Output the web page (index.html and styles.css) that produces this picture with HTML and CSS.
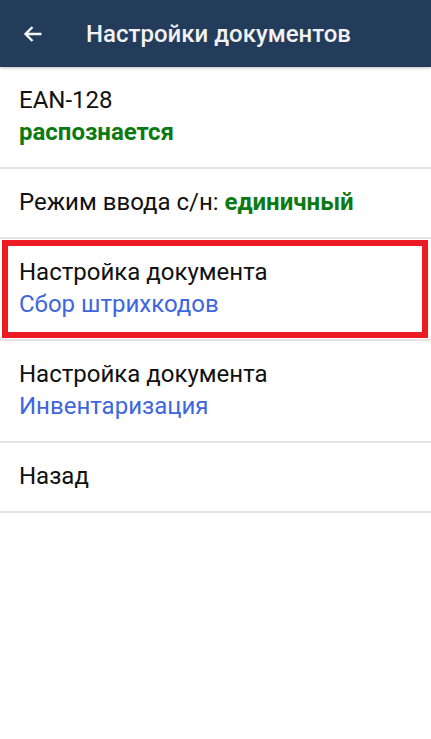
FILE: index.html
```html
<!DOCTYPE html>
<html lang="ru">
<head>
    <meta charset="UTF-8">
    <title>Настройки документов</title>
    <link rel="stylesheet" href="styles.css">
</head>
<body>
    <header class="app_bar">
        <a class="back" href="#">
            <svg width="24" height="24" viewBox="0 0 24 24">
                <path d="M20.5 12H4.5M11.5 5L4.5 12L11.5 19" fill="none" stroke="#f4f4f4" stroke-width="2.4"/>
            </svg>
        </a>
        <h1>Настройки документов</h1>
    </header>
    <ul class="menu">
        <li class="item">
            <span class="title">EAN-128</span>
            <span class="value ok">распознается</span>
        </li>
        <li class="item">
            <span class="title">Режим ввода с/н: <b class="ok">единичный</b></span>
        </li>
        <li class="item marked">
            <span class="title">Настройка документа</span>
            <span class="value link">Сбор штрихкодов</span>
        </li>
        <li class="item">
            <span class="title">Настройка документа</span>
            <span class="value link">Инвентаризация</span>
        </li>
        <li class="item">
            <span class="title">Назад</span>
        </li>
    </ul>
</body>
</html>
```

FILE: styles.css
```css
/* reset */
body {
    margin: 0;
    background: #ffffff;
    font-family: 'Roboto', 'Noto Sans', sans-serif;
}
ul {margin: 0; padding: 0;}
li {list-style: none;}
a {text-decoration: none;}

/* app bar */
.app_bar {
    position: relative;
    z-index: 1;
    display: flex;
    align-items: center;
    height: 67px;
    background: #243c5b;
    box-shadow: 0 1px 3px rgba(0, 0, 0, 0.25);
}
.app_bar > .back {
    display: flex;
    width: 24px;
    height: 24px;
    margin-left: 21px;
}
.app_bar > h1 {
    margin: 0 0 0 41px;
    color: #f2f2f2;
    font-size: 24px;
    font-weight: 500;
}

/* list */
.item {
    position: relative;
    display: flex;
    flex-direction: column;
    padding: 17px 19px 19px;
    border-bottom: 2px solid #e4e4e4;
    font-size: 24px;
    line-height: 32px;
    color: #111111;
}
.item .ok {color: #0b7a12; font-weight: 700;}
.item .link {color: #3d66df;}

/* highlighted row */
.item.marked::after {
    position: absolute;
    top: 1px;
    left: 2px;
    right: 3px;
    bottom: 1px;
    border: 6px solid #ed1c24;
    content: '';
}
```
